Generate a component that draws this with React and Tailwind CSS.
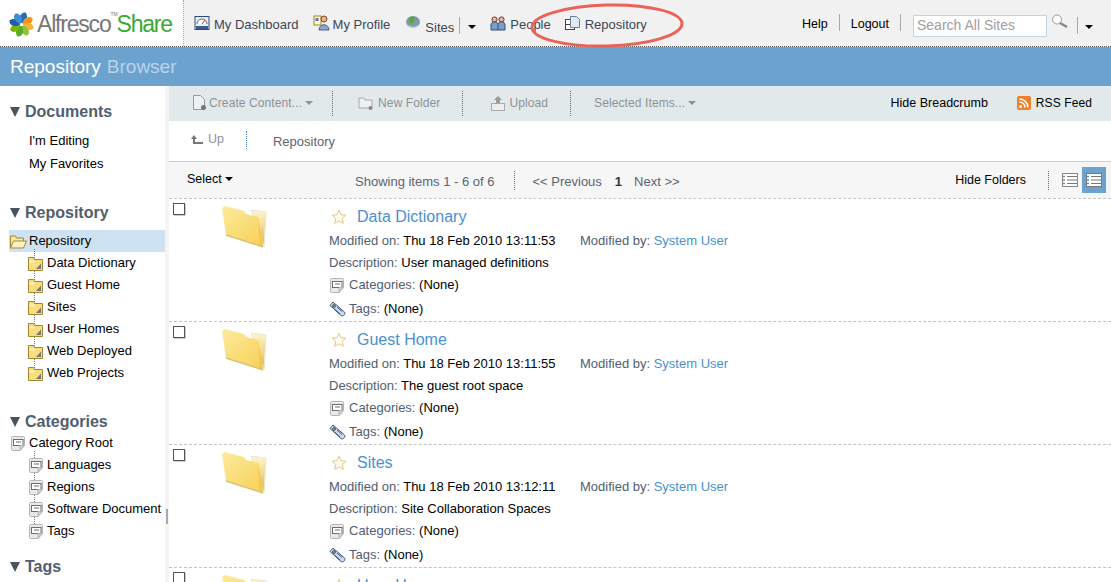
import React from 'react';

const font = { fontFamily: '"Liberation Sans", Arial, sans-serif' };

function Caret({ className = 'border-t-black' }) {
  return <span className={`inline-block w-0 h-0 border-x-[4px] border-x-transparent border-t-[4px] ${className}`}></span>;
}

function Petals() {
  const colors = ['#1c6fb8', '#f7941d', '#f9b233', '#8dc63f', '#5aaa2e', '#7ab800', '#1c5fa8', '#3d8fd1'];
  return (
    <svg width="25" height="25" viewBox="-13 -13 26 26" className="shrink-0">
      {colors.map((c, i) => (
        <path key={i} d="M0 -1C5 -3 6 -9 2 -13C-3 -13 -5 -6 0 -1Z" fill={c} transform={`rotate(${i * 45 + 10})`} />
      ))}
      <circle r="1.600" fill="#fff" />
    </svg>
  );
}

function DashIcon() {
  return (
    <svg width="16" height="16" viewBox="0 0 16 16">
      <rect x="1" y="1.500" width="14" height="13" fill="#e8eef4" stroke="#2e4a7d" />
      <path d="M3 9a5 5 0 0 1 10 0" fill="#fff" stroke="#667" />
      <path d="M8 9l3-4" stroke="#d33" />
      <rect x="2" y="11" width="12" height="3" fill="#3d5b8f" />
    </svg>
  );
}

function ProfileIcon() {
  return (
    <svg width="18" height="16" viewBox="0 0 18 16">
      <rect x="1" y="1" width="7" height="9" fill="#fff4d8" stroke="#a8842a" />
      <circle cx="11" cy="4" r="3" fill="#e6b08a" stroke="#7a4a2a" />
      <path d="M6 15c0-7 10-7 10 0z" fill="#8ca5c8" stroke="#4a628a" />
      <rect x="2.500" y="3" width="3" height="3" fill="#5a7ab0" />
    </svg>
  );
}

function GlobeIcon() {
  return (
    <svg width="16" height="14" viewBox="0 0 16 14">
      <ellipse cx="8" cy="6" rx="7" ry="6" fill="#7f9aa8" />
      <path d="M5 1c4-1 6 1 4 4-1 2-3 3-4 2S3 3 5 1z" fill="#58a83c" />
      <path d="M1 7c3 5 11 5 14 0-1 7-13 7-14 0z" fill="#c8d4da" />
    </svg>
  );
}

function PeopleIcon() {
  return (
    <svg width="16" height="15" viewBox="0 0 16 15">
      <circle cx="4.500" cy="3.500" r="2.600" fill="#e8b8a0" stroke="#6b3a1f" />
      <circle cx="11.500" cy="3.500" r="2.600" fill="#e8b8a0" stroke="#6b3a1f" />
      <path d="M1 14V8c0-1 2-2 3.500-2S8 7 8 8c0-1 2-2 3.500-2S15 7 15 8v6z" fill="#7f9cc4" stroke="#31507f" />
      <path d="M8 8v6" stroke="#31507f" />
    </svg>
  );
}

function RepoIcon() {
  return (
    <svg width="16" height="15" viewBox="0 0 16 15">
      <rect x="0.500" y="3.500" width="9" height="10" fill="#fff" stroke="#444" />
      <path d="M1 8.500h8" stroke="#444" />
      <path d="M5.500 0.500h6l3 3v8h-9z" fill="#dfe8f3" stroke="#6b7f99" />
    </svg>
  );
}

function SmallFolder() {
  return (
    <svg width="16" height="15" viewBox="0 0 16 15" className="shrink-0">
      <path d="M0.500 1.500h5l1 2h8v11h-14z" fill="#f8dd7f" stroke="#a5872f" />
      <path d="M1.500 4.500h5v2h-5z" fill="#fdf1c4" />
      <path d="M13 7.500v5.500H8z" fill="#777" />
    </svg>
  );
}

function OpenFolder() {
  return (
    <svg width="17" height="15" viewBox="0 0 17 15" className="shrink-0">
      <path d="M0.500 14V2h5l1 2h7v3" fill="#f9e6a2" stroke="#a5872f" />
      <path d="M0.500 14l3-7h13l-3 7z" fill="#fdf1c4" stroke="#a5872f" />
    </svg>
  );
}

function NoteIcon() {
  return (
    <svg width="16" height="15" viewBox="0 0 16 15" className="shrink-0">
      <path d="M1.500 1.500q0-1 1-1h11q1 0 1 1v8l-4.500 5h-7.500q-1 0-1-1z" fill="#e9e9e9" stroke="#b5b5b5" />
      <rect x="3.500" y="3.500" width="9.500" height="6" fill="#fff" stroke="#6b6b6b" />
      <path d="M6 6h5" stroke="#6b6b6b" />
      <path d="M14.500 9.500l-4.500 5v-5z" fill="#d2d2d2" stroke="#b5b5b5" />
    </svg>
  );
}

function ClipIcon() {
  return (
    <svg width="17" height="17" viewBox="0 0 17 17" className="shrink-0">
      <path d="M1 4.500l3-3.500 11.500 10c1.500 2-1.500 5-3.500 3.500z" fill="#cdd9ea" stroke="#3d5a85" />
      <circle cx="5" cy="5" r="1.300" fill="#fff" stroke="#223" />
      <path d="M5.500 8l5.500 5M8 6l5 4.500" stroke="#3d5a85" />
    </svg>
  );
}

function BigFolder() {
  return (
    <svg width="48" height="44" viewBox="0 0 48 44">
      <defs>
        <linearGradient id="bigFolderFront" x1="0" y1="0" x2="0.800" y2="1">
          <stop offset="0" stopColor="#fdeb9c" />
          <stop offset="1" stopColor="#f8d25c" />
        </linearGradient>
        <linearGradient id="bigFolderEdge" x1="0" y1="0" x2="0" y2="1">
          <stop offset="0" stopColor="#fff6cf" />
          <stop offset="1" stopColor="#e2b544" />
        </linearGradient>
      </defs>
      <path d="M30 5l15 2-2 35z" fill="url(#bigFolderEdge)" stroke="#e9e6da" />
      <path d="M1 3l3-2 19 5 2 3 12 3 5 30-37-12z" fill="url(#bigFolderFront)" />
      <path d="M37 12l5 30-3-1z" fill="#f3c64a" />
      <path d="M5 30l37 12" stroke="#d9c37a" strokeWidth="1.500" />
    </svg>
  );
}

function Star() {
  return (
    <svg width="16" height="16" viewBox="0 0 16 16" className="shrink-0">
      <path d="M8 1.200l2 4.500 4.900.500-3.700 3.200 1.100 4.900L8 11.800l-4.300 2.500 1.100-4.900L1.100 6.200 6 5.700z" fill="#fffdf5" stroke="#e8c77c" />
    </svg>
  );
}

function ToolIcon({ kind }) {
  if (kind === 'upload') {
    return (
      <svg width="16" height="17" viewBox="0 0 16 17">
        <path d="M8 1l4 4H10v4H6V5H4z" fill="#9a9a9a" />
        <rect x="1.500" y="8.500" width="13" height="7" fill="#eee" stroke="#aaa" />
      </svg>
    );
  }
  if (kind === 'folder') {
    return (
      <svg width="15" height="16" viewBox="0 0 15 16">
        <path d="M1 3h5l1 2h7v8H1z" fill="#eef1f2" stroke="#aaa" />
        <circle cx="12.500" cy="13" r="2" fill="#888" />
      </svg>
    );
  }
  return (
    <svg width="15" height="16" viewBox="0 0 15 16">
      <path d="M1.500 .5h7l4 4v10h-11z" fill="#eef1f2" stroke="#999" />
      <circle cx="11.500" cy="12.500" r="2.500" fill="#777" />
    </svg>
  );
}

function ListIcon({ color }) {
  return (
    <svg width="14" height="10" viewBox="0 0 14 10">
      <path d="M0 1.500h2M0 5h2M0 8.500h2" stroke={color} strokeWidth="1.500" />
      <path d="M4 1.500h10M4 5h10M4 8.500h10" stroke="#777" strokeWidth="1.200" />
    </svg>
  );
}

function Divider({ className = 'h-[25px]' }) {
  return <span className={`border-l border-dotted border-[#3f78a8] ${className}`}></span>;
}

function SideHeading({ children, className = '' }) {
  return (
    <div className={`flex items-center gap-[5px] pl-[10px] h-[22px] ${className}`}>
      <span className="w-0 h-0 border-x-[5.500px] border-x-transparent border-t-[10px] border-t-[#4a5460]"></span>
      <span className="text-[16px] font-bold text-[#515e70]">{children}</span>
    </div>
  );
}

function TreeRow({ icon, label, child, active }) {
  return (
    <div className={`flex items-center h-[22px] text-[13px] text-black ${child ? 'pl-[28px]' : 'pl-[10px]'} ${active ? 'bg-[#cfe2f1] ml-[9px] !pl-[1px]' : ''}`}>
      <span className="relative w-[19px] shrink-0">{icon}</span>
      <span className="whitespace-nowrap">{label}</span>
    </div>
  );
}

function TreeChildren({ items, icon }) {
  return (
    <div className="relative">
      <span className="absolute left-[34px] top-[-3px] bottom-[10px] border-l border-dotted border-[#777]"></span>
      {items.map((t) => <TreeRow key={t} child icon={icon} label={t} />)}
    </div>
  );
}

function Sidebar() {
  const folders = ['Data Dictionary', 'Guest Home', 'Sites', 'User Homes', 'Web Deployed', 'Web Projects'];
  const cats = ['Languages', 'Regions', 'Software Document', 'Tags'];
  return (
    <aside className="w-[165px] shrink-0 pt-[15px]">
      <SideHeading>Documents</SideHeading>
      <div className="pl-[29px] pt-[6px] text-[13px] text-black">
        <div className="h-[23px] leading-[23px]">I'm Editing</div>
        <div className="h-[23px] leading-[23px]">My Favorites</div>
      </div>
      <SideHeading className="mt-[27px]">Repository</SideHeading>
      <div className="mt-[6px]">
        <TreeRow active icon={<OpenFolder />} label="Repository" />
        <TreeChildren items={folders} icon={<SmallFolder />} />
      </div>
      <SideHeading className="mt-[27px]">Categories</SideHeading>
      <div className="-mt-[1px]">
        <TreeRow icon={<NoteIcon />} label="Category Root" />
        <TreeChildren items={cats} icon={<NoteIcon />} />
      </div>
      <SideHeading className="mt-[14px]">Tags</SideHeading>
    </aside>
  );
}

function Row({ name, modified, desc }) {
  return (
    <div className="flex h-[123px] border-t border-dashed border-[#c4c4c4] pt-[3px]">
      <span className="w-[12px] h-[12px] mt-[1px] ml-[4px] border border-[#555] bg-white shrink-0 shadow-[1px_1px_0_#ccc]"></span>
      <div className="w-[144px] shrink-0 pl-[36px] pt-[3px]"><BigFolder /></div>
      <div className="mt-[3px] text-[13px] leading-[22px] text-[#515e70]">
        <div className="flex items-center gap-[10px] h-[24px] pl-[2px]">
          <Star />
          <span className="text-[16px] text-[#4a90d0]">{name}</span>
        </div>
        <div className="flex mt-[1px]">
          <span className="w-[251px]">Modified on: <span className="text-black">{modified}</span></span>
          <span>Modified by: <span className="text-[#4a90d0]">System User</span></span>
        </div>
        <div>Description: <span className="text-black">{desc}</span></div>
        <div className="flex items-center gap-[4px]"><NoteIcon /><span>Categories: <span className="text-black">(None)</span></span></div>
        <div className="flex items-center gap-[3px] mt-[2px]"><ClipIcon /><span>Tags: <span className="text-black">(None)</span></span></div>
      </div>
    </div>
  );
}

function NavItem({ icon, label, className = '', textClass = '' }) {
  return (
    <span className={`flex items-center ${className}`}>
      {icon}
      <span className={textClass}>{label}</span>
    </span>
  );
}

export default function App() {
  return (
    <div className="relative w-[1111px] h-[582px] overflow-hidden bg-white" style={font}>
      <header className="flex h-[47px] border-b border-dotted border-[#555] bg-[#f1f1f1] text-[13px] text-[#3b4656]">
        <div className="flex items-center w-[184px] h-full pl-[9px] pt-[3px] gap-[3px] bg-white border-r border-dotted border-[#aaa] shrink-0">
          <Petals />
          <span className="flex items-start text-[23px] tracking-[-1.200px] text-[#777] whitespace-nowrap">
            Alfresco
            <span className="text-[5px] tracking-normal leading-[14px] w-[6px]">TM</span>
            <span className="text-[#3aa935]">Share</span>
          </span>
        </div>
        <nav className="flex items-center pl-[10px]">
          <NavItem icon={<DashIcon />} label="My Dashboard" className="gap-[4px] mr-[14px]" textClass="pt-[4px]" />
          <NavItem icon={<ProfileIcon />} label="My Profile" className="gap-[2px] mr-[15px]" textClass="pt-[4px]" />
          <NavItem icon={<GlobeIcon />} label="Sites" className="gap-[4px] mr-[5px]" textClass="pt-[9px]" />
          <span className="h-[17px] mt-[4px] border-l border-[#aaa] mr-[8px]"></span>
          <Caret className="border-t-black mr-[14px] mt-[8px]" />
          <NavItem icon={<PeopleIcon />} label="People" className="gap-[4px] mr-[14px]" textClass="pt-[4px]" />
          <NavItem icon={<RepoIcon />} label="Repository" className="gap-[4px]" textClass="pt-[4px]" />
        </nav>
        <div className="flex items-center ml-auto pr-[18px] text-[12.500px] text-black">
          <span className="pt-[2px]">Help</span>
          <span className="h-[17px] mb-[2px] border-l border-[#aaa] mx-[11px]"></span>
          <span className="pt-[2px]">Logout</span>
          <span className="h-[17px] mb-[2px] border-l border-[#aaa] ml-[11px] mr-[12px]"></span>
          <span className="flex items-center w-[134px] h-[22px] mt-[5px] pl-[3px] bg-white border border-[#c3d4e4] text-[14px] text-[#a0a0a0]">Search All Sites</span>
          <svg width="18" height="15" viewBox="0 0 18 15" className="ml-[4px] mb-[3px]">
            <circle cx="6" cy="5.500" r="4.500" fill="#fff" stroke="#999" />
            <path d="M9 9l7 4" stroke="#888" strokeWidth="2.500" />
          </svg>
          <span className="h-[17px] mt-[4px] border-l border-[#aaa] ml-[8px] mr-[7px]"></span>
          <Caret className="border-t-black mt-[8px]" />
        </div>
      </header>

      <div className="flex items-center h-[39px] pl-[10px] pt-[1px] bg-[#6ca3ce] text-[19px]">
        <span className="text-white">Repository</span>
        <span className="ml-[6px] text-[#b9d3e8]">Browser</span>
      </div>

      <div className="flex">
        <Sidebar />
        <div className="w-[4px] shrink-0 bg-[#f4f4f4]">
          <div className="w-[2px] h-[15px] mt-[423px] ml-[1px] bg-[#aaa]"></div>
        </div>
        <main className="flex-1 min-w-0">
          <div className="flex items-center h-[35px] pl-[23px] pr-[19px] pb-[1px] bg-[#e2e9eb] text-[12px] tracking-[0.1px] text-[#8d9296]">
            <NavItem icon={<ToolIcon kind="content" />} label="Create Content..." className="gap-[2px] mr-[3px]" />
            <Caret className="border-t-[#8d9296] mr-[19px]" />
            <Divider />
            <NavItem icon={<ToolIcon kind="folder" />} label="New Folder" className="gap-[5px] ml-[25px] mr-[22px]" />
            <Divider />
            <NavItem icon={<ToolIcon kind="upload" />} label="Upload" className="gap-[3px] ml-[27px] mr-[22px]" />
            <Divider />
            <span className="ml-[23px] mr-[3px]">Selected Items...</span>
            <Caret className="border-t-[#8d9296]" />
            <span className="ml-auto text-[12.500px] tracking-normal text-black">Hide Breadcrumb</span>
            <svg width="14" height="14" viewBox="0 0 14 14" className="ml-[29px] mr-[5px]">
              <rect width="14" height="14" rx="2" fill="#f0812a" />
              <circle cx="3.500" cy="10.500" r="1.500" fill="#fff" />
              <path d="M2.500 6a5.500 5.500 0 0 1 5.500 5.500M2.500 3a8.500 8.500 0 0 1 8.500 8.500" fill="none" stroke="#fff" strokeWidth="1.600" />
            </svg>
            <span className="text-black">RSS Feed</span>
          </div>

          <div className="flex items-center h-[41px] border-b border-[#c8cfd3] pl-[21px] text-[#6e7378]">
            <span className="flex items-center gap-[4px] mb-[3px] text-[12.500px] text-[#8d9296]">
              <svg width="14" height="10" viewBox="0 0 14 10"><path d="M1 4l3-4 3 4H5v3h8v2H3V4z" fill="#777" /></svg>
              Up
            </span>
            <Divider className="h-[18px] ml-[22px] mb-[2px]" />
            <span className="ml-[26px] mt-[2px] text-[13px] text-[#5c6470]">Repository</span>
          </div>

          <div className="flex items-center h-[36px] pl-[18px] pr-[5px] bg-[#f6f6f6] text-[13px]">
            <span className="flex items-center gap-[3px] mb-[2px] w-[45px] text-[12.500px] text-black">Select <Caret /></span>
            <span className="ml-[123px] mt-[3px] text-[#5c6470]">Showing items 1 - 6 of 6</span>
            <Divider className="h-[19px] ml-[20px]" />
            <span className="ml-[17px] mt-[3px] text-[#5c6470]">&lt;&lt; Previous</span>
            <span className="ml-[13px] mt-[3px] font-bold text-[#333]">1</span>
            <span className="ml-[12px] mt-[3px] text-[#5c6470]">Next &gt;&gt;</span>
            <span className="ml-auto text-[12.500px] text-black">Hide Folders</span>
            <Divider className="h-[19px] ml-[22px]" />
            <span className="flex items-center justify-center w-[16px] h-[14px] ml-[13px] mr-[4px] bg-white border border-[#888]">
              <ListIcon color="#888" />
            </span>
            <span className="flex items-center justify-center w-[24px] h-[26px] bg-[#6ca3ce]">
              <span className="flex items-center justify-center w-[16px] h-[14px] bg-white border border-[#777]">
                <ListIcon color="#4f8ad8" />
              </span>
            </span>
          </div>

          <Row name="Data Dictionary" modified="Thu 18 Feb 2010 13:11:53" desc="User managed definitions" />
          <Row name="Guest Home" modified="Thu 18 Feb 2010 13:11:55" desc="The guest root space" />
          <Row name="Sites" modified="Thu 18 Feb 2010 13:12:11" desc="Site Collaboration Spaces" />
          <Row name="User Homes" modified="Thu 18 Feb 2010 13:12:20" desc="User home spaces" />
        </main>
      </div>

      <svg width="170" height="52" viewBox="0 0 170 52" className="absolute left-[523px] top-0 pointer-events-none">
        <ellipse cx="84" cy="25.500" rx="75" ry="20.500" fill="none" stroke="#ea6258" strokeWidth="3" transform="rotate(-1.500 84 25.500)" />
      </svg>
    </div>
  );
}
